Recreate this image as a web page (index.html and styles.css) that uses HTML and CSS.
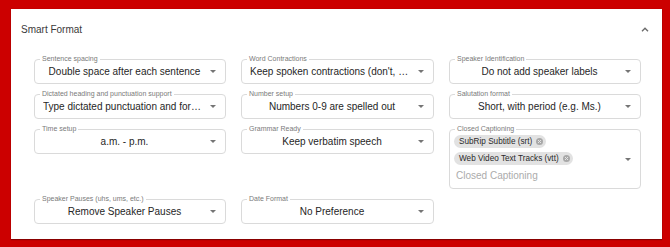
FILE: index.html
```html
<!DOCTYPE html>
<html>
<head>
<meta charset="utf-8">
<link rel="stylesheet" href="styles.css">
</head>
<body>
<section class="panel">
  <header class="panel-head">
    <span class="panel-title">Smart Format</span>
    <svg class="chev" width="8" height="5" viewBox="0 0 8 5"><path d="M1 4.2 L4 1.2 L7 4.2" fill="none" stroke="#6b6b6b" stroke-width="1.4"/></svg>
  </header>
  <div class="grid">
    <div class="field"><span class="lbl">Sentence spacing</span><span class="val">Double space after each sentence</span><i class="arrow"></i></div>
    <div class="field"><span class="lbl">Word Contractions</span><span class="val">Keep spoken contractions (don't, won't)</span><i class="arrow"></i></div>
    <div class="field"><span class="lbl">Speaker Identification</span><span class="val">Do not add speaker labels</span><i class="arrow"></i></div>

    <div class="field"><span class="lbl">Dictated heading and punctuation support</span><span class="val">Type dictated punctuation and formatting</span><i class="arrow"></i></div>
    <div class="field"><span class="lbl">Number setup</span><span class="val">Numbers 0-9 are spelled out</span><i class="arrow"></i></div>
    <div class="field"><span class="lbl">Salutation format</span><span class="val">Short, with period (e.g. Ms.)</span><i class="arrow"></i></div>

    <div class="field"><span class="lbl">Time setup</span><span class="val">a.m. - p.m.</span><i class="arrow"></i></div>
    <div class="field"><span class="lbl">Grammar Ready</span><span class="val">Keep verbatim speech</span><i class="arrow"></i></div>
    <div class="field multi"><span class="lbl">Closed Captioning</span>
      <div class="chips">
        <span class="chip">SubRip Subtitle (srt)<svg class="x" width="7" height="7" viewBox="0 0 7 7"><circle cx="3.5" cy="3.5" r="3.5" fill="#a8a8a8"/><path d="M2 2 L5 5 M5 2 L2 5" stroke="#e4e4e4" stroke-width="1"/></svg></span>
        <span class="chip">Web Video Text Tracks (vtt)<svg class="x" width="7" height="7" viewBox="0 0 7 7"><circle cx="3.5" cy="3.5" r="3.5" fill="#a8a8a8"/><path d="M2 2 L5 5 M5 2 L2 5" stroke="#e4e4e4" stroke-width="1"/></svg></span>
        <span class="ph">Closed Captioning</span>
      </div>
      <i class="arrow"></i>
    </div>

    <div class="field"><span class="lbl">Speaker Pauses (uhs, ums, etc.)</span><span class="val">Remove Speaker Pauses</span><i class="arrow"></i></div>
    <div class="field"><span class="lbl">Date Format</span><span class="val">No Preference</span><i class="arrow"></i></div>
  </div>
</section>
</body>
</html>
```

FILE: styles.css
```css
html, body {
  margin: 0;
  padding: 0;
}
body {
  background: #cc0000;
  padding: 9px 8px 8px 11px;
  font-family: "Liberation Sans", Arial, sans-serif;
  width: 670px;
  height: 247px;
  box-sizing: border-box;
}
.panel {
  background: #fff;
  width: 651px;
  height: 230px;
  box-sizing: border-box;
  box-shadow: 0 1px 1px rgba(0,0,0,0.3), 0 0 1px rgba(0,0,0,0.2);
}
.panel-head {
  height: 40px;
  display: flex;
  align-items: center;
  justify-content: space-between;
  padding: 0 13px 0 10px;
}
.panel-title {
  font-size: 10px;
  color: #3a3a3a;
}
.chev {
  display: block;
}
.grid {
  display: grid;
  grid-template-columns: 192px 193px 192px;
  column-gap: 15px;
  row-gap: 10px;
  align-items: start;
  padding: 10px 0 0 23px;
}
.field {
  position: relative;
  height: 25px;
  box-sizing: border-box;
  border: 1px solid #dadada;
  border-radius: 4px;
  display: flex;
  align-items: center;
  padding: 0 9px 0 8px;
}
.lbl {
  position: absolute;
  top: -5px;
  left: 5px;
  background: #fff;
  padding: 0 2px;
  font-size: 7px;
  line-height: 8px;
  color: #7a7a7a;
  white-space: nowrap;
}
.val {
  flex: 1;
  min-width: 0;
  font-size: 10px;
  color: #262626;
  text-align: center;
  white-space: nowrap;
  overflow: hidden;
  text-overflow: ellipsis;
}
.arrow {
  width: 0;
  height: 0;
  margin-left: 4px;
  border-left: 3px solid transparent;
  border-right: 3px solid transparent;
  border-top: 3px solid #757575;
  flex: none;
}
.multi {
  height: 60px;
  padding: 0 9px 0 4px;
}
.chips {
  flex: 1;
  display: flex;
  flex-direction: column;
  align-items: flex-start;
  gap: 4px;
}
.chip {
  display: flex;
  align-items: center;
  height: 13px;
  background: #e2e2e2;
  border-radius: 7px;
  padding: 0 3px 0 5px;
  font-size: 8.2px;
  color: #2a2a2a;
  white-space: nowrap;
}
.chip .x {
  margin-left: 4px;
  display: block;
}
.ph {
  height: 14px;
  line-height: 14px;
  font-size: 10px;
  color: #ababab;
  padding-left: 2px;
}
```
